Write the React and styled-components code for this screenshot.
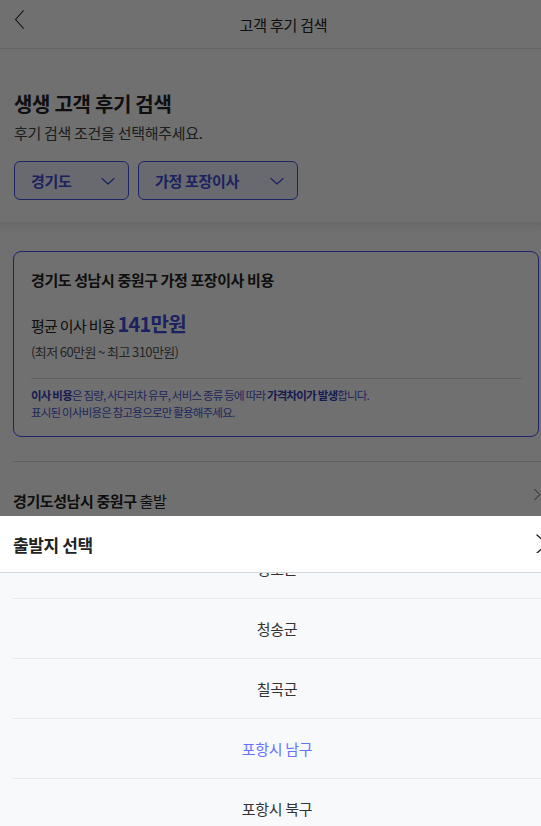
import React from 'react';
import styled, { createGlobalStyle } from 'styled-components';

const GlobalStyle = createGlobalStyle`
  html, body {
    margin: 0;
    padding: 0;
    background: #ffffff;
    overflow: hidden;
  }
  body {
    font-family: "Noto Sans CJK KR", "Noto Sans", sans-serif;
    color: #222222;
  }
  * {
    box-sizing: border-box;
  }
`;

const Page = styled.div`
  position: relative;
  width: 541px;
  height: 826px;
  overflow: hidden;
  background: #ffffff;
`;

const Header = styled.header`
  display: flex;
  align-items: center;
  height: 49px;
  padding-left: 10px;
  border-bottom: 1px solid #e6e6e6;
`;

const BackButton = styled.button`
  display: flex;
  align-items: center;
  justify-content: center;
  width: 18px;
  height: 24px;
  margin-top: -10px;
  padding: 0;
  border: none;
  background: none;
`;

const HeaderTitle = styled.h1`
  flex: 1;
  margin: 0;
  padding-right: 2px;
  text-align: center;
  font-size: 15px;
  font-weight: 400;
  color: #222222;
  letter-spacing: -0.2px;
`;

const Intro = styled.section`
  padding: 41px 14px 22px;
`;

const IntroTitle = styled.h2`
  margin: 0;
  font-size: 20px;
  line-height: 28px;
  font-weight: 700;
  letter-spacing: -0.3px;
  color: #222222;
`;

const IntroText = styled.p`
  margin: 4px 0 0;
  font-size: 15px;
  line-height: 22px;
  color: #444444;
  letter-spacing: -0.3px;
`;

const Filters = styled.div`
  display: flex;
  gap: 9px;
  margin-top: 17px;
`;

const Select = styled.button`
  display: flex;
  align-items: center;
  justify-content: space-between;
  width: ${(p) => p.$width}px;
  height: 39px;
  padding: 0 12px 0 16px;
  border: 1px solid #4656e6;
  border-radius: 6px;
  background: #eef0ff;
  color: #3f4fd8;
  font-family: inherit;
  font-size: 15px;
  font-weight: 700;
  letter-spacing: -0.3px;
`;

const Band = styled.div`
  height: 8px;
  background: linear-gradient(#efefef, #fafafa);
`;

const Content = styled.section`
  padding: 21px 0 0 13px;
`;

const PriceCard = styled.div`
  margin-right: 2px;
  padding: 15px 16px 15px 17px;
  border: 1px solid #4656e6;
  border-radius: 8px;
  background: #ffffff;
`;

const CardTitle = styled.h3`
  margin: 0;
  font-size: 15px;
  line-height: 26px;
  font-weight: 700;
  letter-spacing: -0.4px;
  color: #222222;
`;

const Average = styled.div`
  display: flex;
  align-items: baseline;
  margin-top: 17px;
  font-size: 15px;
  line-height: 28px;
  letter-spacing: -0.7px;
  color: #222222;
  white-space: pre;
`;

const AverageValue = styled.strong`
  font-size: 20px;
  font-weight: 700;
  color: #3f4fd8;
  letter-spacing: -0.8px;
`;

const Range = styled.p`
  margin: 1px 0 0;
  font-size: 13px;
  line-height: 22px;
  letter-spacing: -0.6px;
  color: #555555;
`;

const Rule = styled.hr`
  margin: 15px 0 8px;
  border: none;
  border-top: 1px solid #dcdcdc;
`;

const Note = styled.p`
  margin: 0;
  font-size: 11.5px;
  line-height: 17px;
  letter-spacing: -0.8px;
  color: #4b5ad6;

  b {
    font-weight: 700;
    color: #3542b8;
  }
`;

const Divider = styled.div`
  margin-top: 24px;
  border-top: 1px solid #dedede;
`;

const RouteRow = styled.div`
  display: flex;
  align-items: center;
  justify-content: space-between;
  height: 76px;
  font-size: 15px;
  letter-spacing: -0.4px;
  color: #222222;

  b {
    font-weight: 700;
  }

  svg {
    margin-top: -12px;
    margin-right: -1px;
  }
`;

const Dim = styled.div`
  position: absolute;
  inset: 0;
  background: rgba(0, 0, 0, 0.56);
`;

const Sheet = styled.div`
  position: absolute;
  left: 0;
  right: 0;
  top: 516px;
  bottom: 0;
  display: flex;
  flex-direction: column;
  overflow: hidden;
  background: #f8f9fa;
`;

const SheetHeader = styled.div`
  position: relative;
  z-index: 1;
  flex-shrink: 0;
  display: flex;
  align-items: center;
  justify-content: space-between;
  height: 57px;
  padding-left: 13px;
  background: #ffffff;
  border-bottom: 1px solid #d3d9e0;
`;

const SheetTitle = styled.h4`
  margin: 0;
  font-size: 17px;
  font-weight: 700;
  letter-spacing: -0.4px;
  color: #222222;
`;

const CloseButton = styled.button`
  display: flex;
  align-items: center;
  width: 5px;
  height: 20px;
  margin-top: -2px;
  padding: 0;
  border: none;
  background: none;
  overflow: hidden;

  svg {
    flex-shrink: 0;
  }
`;

const OptionList = styled.ul`
  flex-shrink: 0;
  margin: -34px 0 0 13px;
  padding: 0;
  list-style: none;
`;

const Option = styled.li`
  display: flex;
  align-items: center;
  justify-content: center;
  height: 60px;
  border-bottom: 1px solid #e7eaee;
  font-size: 15px;
  letter-spacing: -0.3px;
  color: ${(p) => (p.$active ? '#6573ff' : '#333333')};
`;

const Chevron = ({ dir = 'down', size = 16, color = '#3f4fd8' }) => {
  const paths = {
    down: 'M2 5.5l6 5.5 6-5.5',
    left: 'M13 2L4 12l9 10',
    right: 'M4 2l7 7-7 7',
  };
  const box = dir === 'left' ? '0 0 16 24' : dir === 'right' ? '0 0 14 18' : '0 0 16 16';
  const h = dir === 'left' ? size * 1.5 : dir === 'right' ? size * 1.3 : size;
  return (
    <svg width={size} height={h} viewBox={box} fill="none">
      <path d={paths[dir]} stroke={color} strokeWidth="1.2" strokeLinecap="round" strokeLinejoin="round" />
    </svg>
  );
};

const options = ['청도군', '청송군', '칠곡군', '포항시 남구', '포항시 북구'];

export default function App() {
  return (
    <Page>
      <GlobalStyle />
      <Header>
        <BackButton>
          <Chevron dir="left" size={14} color="#111111" />
        </BackButton>
        <HeaderTitle>고객 후기 검색</HeaderTitle>
      </Header>

      <Intro>
        <IntroTitle>생생 고객 후기 검색</IntroTitle>
        <IntroText>후기 검색 조건을 선택해주세요.</IntroText>
        <Filters>
          <Select $width={115}>
            경기도
            <Chevron size={16} />
          </Select>
          <Select $width={160}>
            가정 포장이사
            <Chevron size={16} />
          </Select>
        </Filters>
      </Intro>

      <Band />

      <Content>
        <PriceCard>
          <CardTitle>경기도 성남시 중원구 가정 포장이사 비용</CardTitle>
          <Average>
            평균 이사 비용 <AverageValue>141만원</AverageValue>
          </Average>
          <Range>(최저 60만원 ~ 최고 310만원)</Range>
          <Rule />
          <Note>
            <b>이사 비용</b>은 짐량, 사다리차 유무, 서비스 종류 등에 따라 <b>가격차이가 발생</b>합니다.
          </Note>
          <Note>표시된 이사비용은 참고용으로만 활용해주세요.</Note>
        </PriceCard>
        <Divider />
        <RouteRow>
          <span>
            <b>경기도성남시 중원구</b> 출발
          </span>
          <Chevron dir="right" size={10} color="#333333" />
        </RouteRow>
      </Content>

      <Dim />

      <Sheet>
        <SheetHeader>
          <SheetTitle>출발지 선택</SheetTitle>
          <CloseButton>
            <svg width="12" height="20" viewBox="0 0 12 20" fill="none">
              <path d="M1 2l10 9M1 20l10-9" stroke="#222222" strokeWidth="1.4" strokeLinecap="round" />
            </svg>
          </CloseButton>
        </SheetHeader>
        <OptionList>
          {options.map((name) => (
            <Option key={name} $active={name === '포항시 남구'}>
              {name}
            </Option>
          ))}
        </OptionList>
      </Sheet>
    </Page>
  );
}
